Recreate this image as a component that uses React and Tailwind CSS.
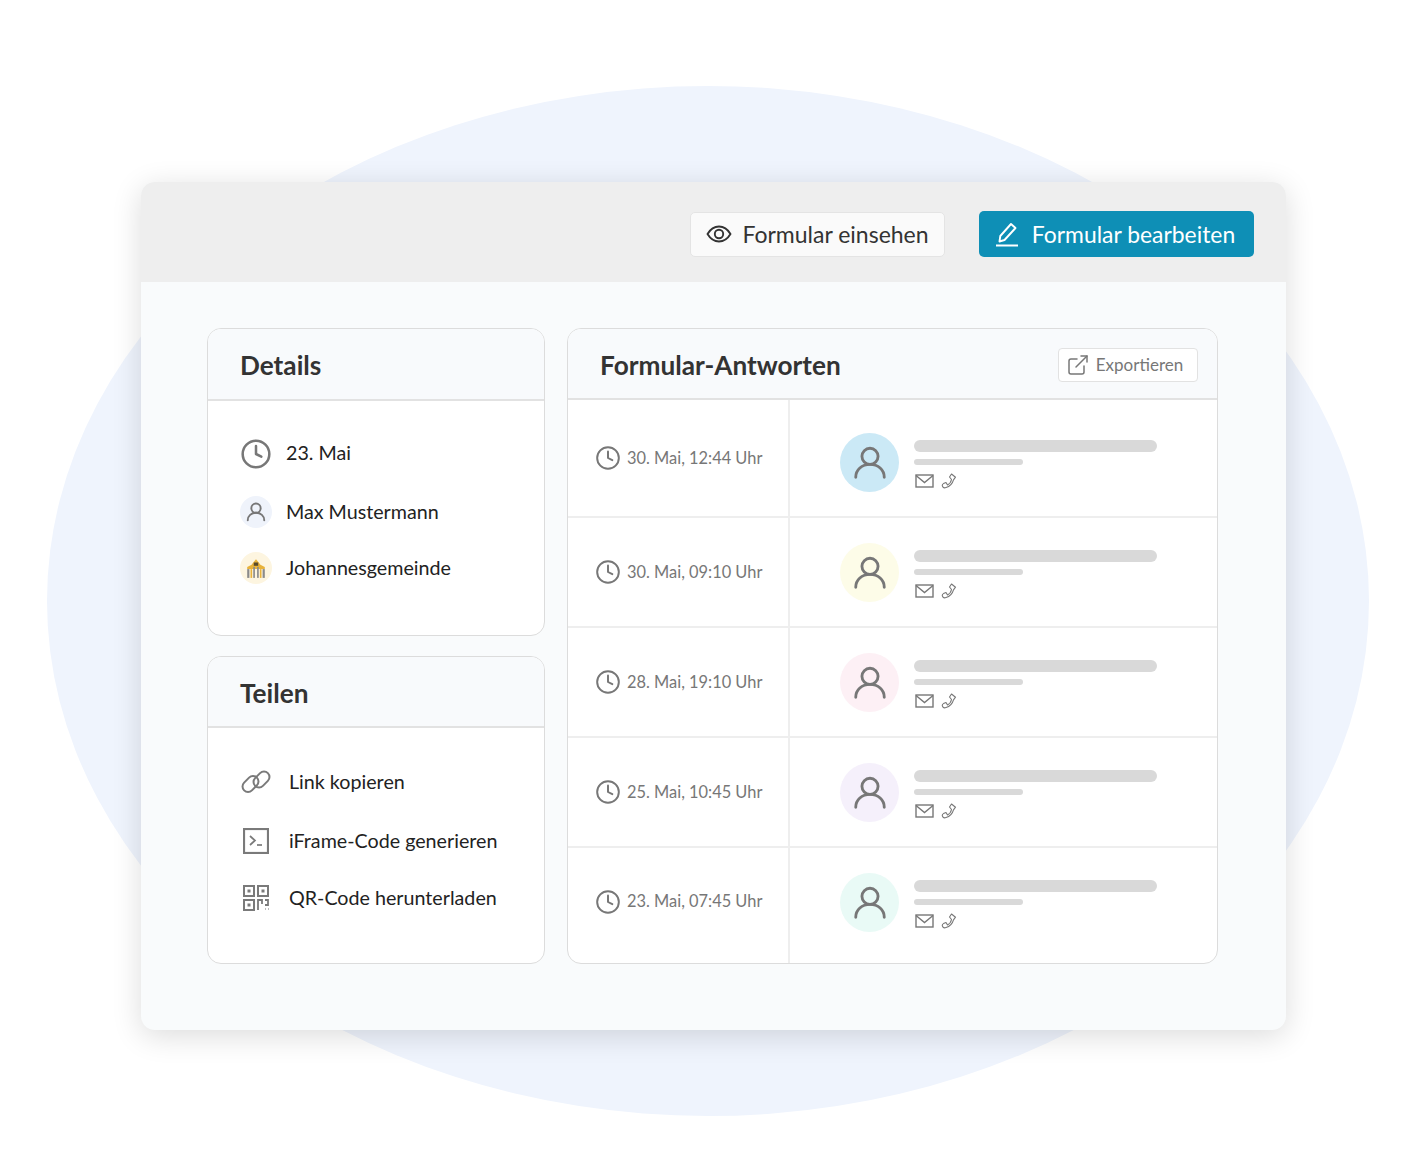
import { Clock, ExternalLink } from 'lucide-react';

const responses = [
  { date: '30. Mai, 12:44 Uhr', color: 'bg-[#cbe9f6]', h: 'h-[118px]', pt: 'pt-[33px]', pb: 'pb-0' },
  { date: '30. Mai, 09:10 Uhr', color: 'bg-[#fdfce8]', h: 'h-[110px]', pt: 'pt-[25px]', pb: 'pb-0' },
  { date: '28. Mai, 19:10 Uhr', color: 'bg-[#fdf0f5]', h: 'h-[110px]', pt: 'pt-[25px]', pb: 'pb-0' },
  { date: '25. Mai, 10:45 Uhr', color: 'bg-[#f5f0fb]', h: 'h-[110px]', pt: 'pt-[25px]', pb: 'pb-0' },
  { date: '23. Mai, 07:45 Uhr', color: 'bg-[#e9faf6]', h: 'h-[117px]', pt: 'pt-[25px]', pb: 'pb-[10px]' },
];

const Person = ({ size, stroke }) => (
  <svg width={size} height={size} viewBox="0 0 40 40" fill="none" stroke="#777" strokeWidth={stroke} strokeLinecap="round">
    <circle cx="20" cy="13" r="8.5" />
    <path d="M5 35c0-8 6.500-13.500 15-13.500S35 27 35 35" />
  </svg>
);

const EyeIcon = () => (
  <svg width="26" height="18" viewBox="0 0 26 18" fill="none" stroke="#333" strokeWidth="1.900">
    <path d="M1.500 9C4.500 4 8.500 1.500 13 1.500S21.500 4 24.500 9C21.500 14 17.500 16.500 13 16.500S4.500 14 1.500 9z" strokeLinejoin="round" />
    <circle cx="13" cy="9" r="4.200" />
  </svg>
);

const PenIcon = () => (
  <svg width="24" height="26" viewBox="0 0 24 26" fill="none" stroke="#fff" strokeWidth="1.900" strokeLinejoin="round">
    <path d="M16 3l4.500 4L9.500 19l-5 1.500 .8-5.500z" />
    <path d="M1 24.500h22" />
  </svg>
);

const MailIcon = () => (
  <svg width="19" height="14" viewBox="0 0 19 14" fill="none" stroke="#777" strokeWidth="1.400">
    <rect x="1" y="1" width="17" height="12" />
    <path d="M1 1.500l8.500 7 8.500-7" />
  </svg>
);

const PhoneOutline = () => (
  <svg width="16" height="16" viewBox="0 0 16 16" fill="none" stroke="#777" strokeWidth="1.100" strokeLinejoin="round">
    <path d="M10.500 1l4 3.200-2 2.600C11.500 10.300 8.500 13.500 5 14.600c-1.500.5-3 0-3.500-1.400-.5-1 0-2 1-2.600L5 9.500l1.500 2.500c2-1 3.500-3 4-5.500L8.500 4z" />
  </svg>
);

const Building = () => (
  <svg width="22" height="22" viewBox="0 0 20 20">
    <path d="M2 9l4-2 1.500-2L10 2l2.500 3L14 7l4 2v2H2z" fill="#e8b23a" />
    <rect x="8" y="5" width="4" height="3" fill="#5a4a2a" />
    <rect x="2" y="11" width="2" height="8" fill="#8a8a8a" />
    <rect x="5" y="11" width="1.500" height="8" fill="#e8b23a" />
    <rect x="7.500" y="9" width="1.500" height="10" fill="#8a8a8a" />
    <rect x="11" y="9" width="1.500" height="10" fill="#8a8a8a" />
    <rect x="13.500" y="11" width="1.500" height="8" fill="#e8b23a" />
    <rect x="16" y="11" width="2" height="8" fill="#8a8a8a" />
  </svg>
);

const LinkIcon = () => (
  <svg width="32" height="24" viewBox="0 0 32 24" fill="none" stroke="#7a7a7a" strokeWidth="2">
    <rect x="1.500" y="8.500" width="18" height="11" rx="5.500" transform="rotate(-45 10.500 14)" />
    <rect x="12.500" y="4" width="18" height="11" rx="5.500" transform="rotate(-45 21.500 9.500)" />
  </svg>
);

const TerminalIcon = () => (
  <svg width="26" height="26" viewBox="0 0 26 26" fill="none" stroke="#7a7a7a">
    <rect x="1" y="1" width="24" height="24" strokeWidth="2.200" />
    <path d="M7 8l5 4.500L7 17" strokeWidth="1.700" />
    <path d="M14 17h5" strokeWidth="1.700" />
  </svg>
);

const QrIcon = () => (
  <svg width="26" height="26" viewBox="0 0 26 26" fill="none" stroke="#7a7a7a" strokeWidth="2">
    <rect x="1" y="1" width="10" height="10" />
    <rect x="15" y="1" width="10" height="10" />
    <rect x="1" y="15" width="10" height="10" />
    <rect x="4.500" y="4.500" width="3" height="3" fill="#7a7a7a" stroke="none" />
    <rect x="18.500" y="4.500" width="3" height="3" fill="#7a7a7a" stroke="none" />
    <rect x="4.500" y="18.500" width="3" height="3" fill="#7a7a7a" stroke="none" />
    <path d="M15 25V15h4v4M22 15h3v5h-3M22 24h.5M25 24h.5" strokeWidth="1.800" />
  </svg>
);

const CardHeader = ({ title, children, pl = 'pl-8', h = 'h-[72px]' }) => (
  <div className={`${h} ${pl} pr-[19px] bg-[#f8fafc] border-b-2 border-[#e2e2e2] flex items-center justify-between`}>
    <h2 className="mt-[4px] text-[26.2px] font-bold text-[#333]">{title}</h2>
    {children}
  </div>
);

const App = () => {
  return (
    <div className="relative w-[1428px] h-[1175px] bg-white overflow-hidden font-['Lato','Open_Sans',sans-serif]">
      <div className="absolute left-[47px] top-[86px] w-[1322px] h-[1030px] rounded-[50%] bg-[#eff4fd]"></div>

      <div className="relative ml-[141px] top-[182px] w-[1145px] h-[848px] rounded-[14px] overflow-hidden bg-[#f9fbfc] shadow-[0_6px_30px_rgba(0,0,0,0.14)]">
        <div className="h-[100px] bg-[#eeeeee] pt-1 pr-[32px] flex items-center justify-end gap-[34px]">
          <button className="w-[255px] h-[45px] bg-[#fafafa] border border-[#e4e4e4] rounded-[5px] flex items-center justify-center gap-[10px] text-[23px] text-[#333]">
            <EyeIcon />
            Formular einsehen
          </button>
          <button className="w-[275px] h-[46px] pr-[3px] bg-[#0e8fb6] rounded-[5px] flex items-center justify-center gap-[13px] text-[22.900px] text-white">
            <PenIcon />
            Formular bearbeiten
          </button>
        </div>

        <div className="pl-[66px] pt-[46px] flex gap-[22px]">
          <div className="w-[338px] flex flex-col gap-5">
            <div className="h-[308px] bg-white border border-[#dcdcdc] rounded-[14px] overflow-hidden">
              <CardHeader title="Details" />
              <div className="pt-[36px] pl-[32px] text-[19.7px] text-[#222]">
                <div className="h-[32px] flex items-center gap-[14px]">
                  <Clock size={32} strokeWidth={1.9} color="#777" className="mt-[2px]" />
                  <span>23. Mai</span>
                </div>
                <div className="mt-[27px] h-[32px] flex items-center gap-[14px]">
                  <div className="w-[32px] h-[32px] rounded-full bg-[#eff3fb] flex items-center justify-center">
                    <Person size={22} stroke={3.5} />
                  </div>
                  <span>Max Mustermann</span>
                </div>
                <div className="mt-[24px] h-[32px] flex items-center gap-[14px]">
                  <div className="w-[32px] h-[32px] rounded-full bg-[#fdf5e0] flex items-center justify-center">
                    <Building />
                  </div>
                  <span>Johannesgemeinde</span>
                </div>
              </div>
            </div>

            <div className="h-[308px] bg-white border border-[#dcdcdc] rounded-[14px] overflow-hidden">
              <CardHeader title="Teilen" h="h-[71px]" />
              <div className="pt-[38px] pl-[32px] text-[19.7px] text-[#222]">
                <div className="h-[32px] flex items-center gap-[17px]">
                  <LinkIcon />
                  <span>Link kopieren</span>
                </div>
                <div className="mt-[27px] h-[32px] flex items-center gap-[20px]">
                  <div className="ml-[3px]"><TerminalIcon /></div>
                  <span>iFrame-Code generieren</span>
                </div>
                <div className="mt-[25px] h-[32px] flex items-center gap-[20px]">
                  <div className="ml-[3px]"><QrIcon /></div>
                  <span>QR-Code herunterladen</span>
                </div>
              </div>
            </div>
          </div>

          <div className="w-[651px] h-[636px] bg-white border border-[#dcdcdc] rounded-[14px] overflow-hidden">
            <CardHeader title="Formular-Antworten" h="h-[71px]">
              <button className="w-[140px] h-[34px] mt-[2px] pr-[7px] bg-white border border-[#e2e2e2] rounded-[4px] flex items-center justify-center gap-[6px] text-[17px] text-[#777]">
                <ExternalLink size={24} strokeWidth={1.5} color="#777" />
                Exportieren
              </button>
            </CardHeader>
            {responses.map((r, i) => (
              <div key={r.date} className={`${r.h} flex ${i < 4 ? 'border-b-2 border-[#eeeeee]' : ''}`}>
                <div className={`w-[222px] border-r-2 border-[#eeeeee] flex items-center pl-[27px] gap-[6px] text-[16.4px] text-[#777] ${r.pb}`}>
                  <Clock size={26} strokeWidth={1.8} color="#777" />
                  <span>{r.date}</span>
                </div>
                <div className={`flex-1 pl-[50px] ${r.pt} flex items-start gap-[15px]`}>
                  <div className={`w-[59px] h-[59px] rounded-full ${r.color} flex items-center justify-center`}>
                    <Person size={38} stroke={3} />
                  </div>
                  <div className="pt-[7px] flex flex-col">
                    <div className="w-[243px] h-[12px] rounded-full bg-[#d9d9d9]"></div>
                    <div className="mt-[7px] w-[109px] h-[6px] rounded-full bg-[#d9d9d9]"></div>
                    <div className="mt-[8px] ml-[1px] flex items-center gap-[7px]">
                      <MailIcon />
                      <PhoneOutline />
                    </div>
                  </div>
                </div>
              </div>
            ))}
          </div>
        </div>
      </div>
    </div>
  );
};

export default App;
